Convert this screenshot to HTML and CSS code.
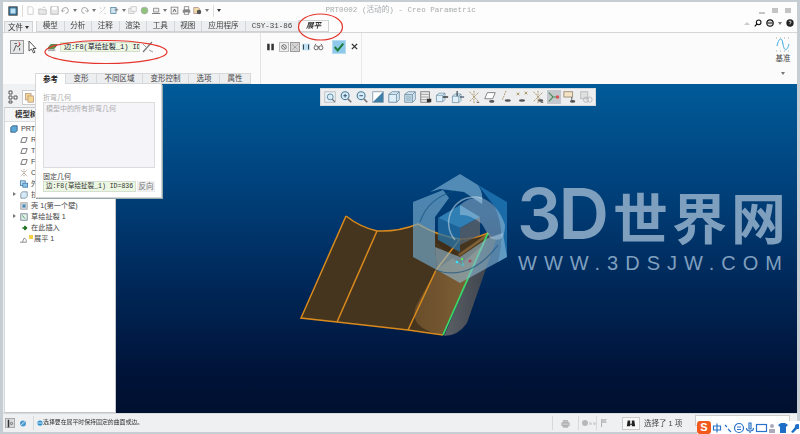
FILE: index.html
```html
<!DOCTYPE html>
<html lang="zh">
<head>
<meta charset="utf-8">
<title>PRT0002 (活动的) - Creo Parametric</title>
<link rel="stylesheet" href="styles.css">
</head>
<body>
<svg class="defs" width="0" height="0">
  <symbol id="cube" viewBox="0 0 16 16"><path d="M2 5l4-3h8v9l-3 3H2z" fill="#dff0fa" stroke="#6a8ca0"/><path d="M2 5h9v9M11 5l3-3" fill="none" stroke="#6a8ca0"/></symbol>
  <symbol id="zoom" viewBox="0 0 16 16"><circle cx="7" cy="6.500" r="4.500" fill="#d7ecf7" stroke="#4d7f9d" stroke-width="1.300"/><path d="M10 10l4 4" stroke="#777" stroke-width="2"/></symbol>
  <symbol id="datum" viewBox="0 0 16 16"><path d="M3 2l10 11M13 3L3 13M8 1v14" stroke="#a58a55" stroke-width="1" stroke-dasharray="2 1" fill="none"/><path d="M11 14h3" stroke="#333"/></symbol>
</svg>
<div class="app">
  <header class="titlebar">
    <div class="qat">
      <svg class="ico" viewBox="0 0 12 12"><rect x="1" y="1" width="10" height="10" fill="#3d7ea8" stroke="#333"/><rect x="3" y="3" width="6" height="6" fill="#bfe0f2"/></svg>
      <span class="qsep"></span>
      <svg class="ico dim" viewBox="0 0 12 12"><path d="M2.500 1h5l2 2v8h-7z" fill="#fff" stroke="#aaa"/></svg>
      <svg class="ico dim" viewBox="0 0 12 12"><path d="M1 4h4l1 1h5v6H1z" fill="#ddd" stroke="#999"/><path d="M6 3l2-2 2 2" fill="none" stroke="#999"/></svg>
      <svg class="ico dim" viewBox="0 0 12 12"><path d="M1 1h10v10H1z" fill="#ddd" stroke="#888"/><path d="M3 1h6v4H3z" fill="#fff"/></svg>
      <svg class="ico dim" viewBox="0 0 12 12"><path d="M2 7a4 4 0 1 1 4 3" fill="none" stroke="#777" stroke-width="1.200"/><path d="M0 5l2 3 3-2" fill="none" stroke="#777"/></svg>
      <span class="caret"></span>
      <svg class="ico dim" viewBox="0 0 12 12"><path d="M10 7a4 4 0 1 0-4 3" fill="none" stroke="#777" stroke-width="1.200"/><path d="M12 5l-2 3-3-2" fill="none" stroke="#777"/></svg>
      <span class="caret"></span>
      <svg class="ico dim" viewBox="0 0 12 12"><path d="M2 10l8-8M3 2l1 2M9 9l1 2M8 1l1 2" stroke="#999" fill="none" stroke-dasharray="2 1"/></svg>
      <svg class="ico" viewBox="0 0 12 12"><rect x="1" y="2" width="7" height="8" fill="#cfe5f1" stroke="#4d7f9d"/><path d="M6 5h5M9 3v4" stroke="#777"/></svg>
      <span class="caret"></span>
      <svg class="ico dim" viewBox="0 0 12 12"><rect x="1" y="3" width="7" height="7" fill="#e8e8e8" stroke="#aaa"/><rect x="4" y="1" width="7" height="6" fill="#f2f2f2" stroke="#aaa"/></svg>
      <svg class="ico" viewBox="0 0 12 12"><circle cx="6" cy="6" r="4.500" fill="#8fc27a" stroke="#aaa"/></svg>
      <svg class="ico" viewBox="0 0 12 12"><path d="M2 3h7v5H2z" fill="#eee" stroke="#777"/><path d="M0 10h11" stroke="#555"/></svg>
      <span class="caret"></span>
      <svg class="ico" viewBox="0 0 12 12"><rect x="1.500" y="1.500" width="9" height="9" fill="#f6f6f6" stroke="#777"/><path d="M4 8l2-4 2 4" fill="none" stroke="#333"/></svg>
      <svg class="ico" viewBox="0 0 12 12"><rect x="3" y="1" width="6" height="4" fill="#fff" stroke="#777"/><rect x="1" y="5" width="10" height="4" fill="#888"/><rect x="3" y="8" width="6" height="3" fill="#fff" stroke="#777"/></svg>
      <svg class="ico" viewBox="0 0 12 12"><path d="M1 2h6l2 2v6H1z" fill="#f2dca8" stroke="#a88"/><circle cx="8" cy="8" r="3" fill="#555"/></svg>
      <span class="caret"></span>
      <span class="qsep"></span>
      <span class="caret strong"></span>
    </div>
    <h1 class="apptitle">PRT0002 (活动的) - Creo Parametric</h1>
    <div class="winbtns"><span class="wb-min"></span><span class="wb-max"></span><span class="wb-close"></span></div>
  </header>

  <nav class="tabrow">
    <button class="filetab">文件 <i class="caret dark"></i></button>
    <div class="tabs">
      <span class="tab">模型</span><span class="tab">分析</span><span class="tab">注释</span><span class="tab">渲染</span><span class="tab">工具</span><span class="tab">视图</span><span class="tab app4">应用程序</span><span class="tab mono">CSY-31-86</span><span class="tab active">展平</span>
    </div>
    <div class="helpgroup">
      <span class="up"></span>
      <svg class="hi" viewBox="0 0 12 12"><circle cx="7" cy="5" r="3.500" fill="none" stroke="#111" stroke-width="1.600"/><path d="M4.500 7.500L1 11" stroke="#111" stroke-width="1.800"/></svg>
      <svg class="hi" viewBox="0 0 12 12"><circle cx="6" cy="6" r="4.800" fill="none" stroke="#111" stroke-width="1.800"/><path d="M2 5h8M2 7h8" stroke="#111"/></svg>
      <span class="caret"></span>
      <svg class="hi" viewBox="0 0 12 12"><circle cx="6" cy="6" r="5.500" fill="#222"/><path d="M4.500 4.500a1.600 1.600 0 1 1 2 1.700L6 7v1" fill="none" stroke="#fff" stroke-width="1.200"/></svg>
    </div>
  </nav>

  <section class="ribbon">
    <div class="rgroup first">
      <button class="tool pressed"><svg viewBox="0 0 14 14"><path d="M3 12l3-7 2 2 3-3M4 3h3M10 8v3" fill="none" stroke="#444"/><path d="M9 1l1.500 2.500L9 5" stroke="#c33" fill="none"/></svg></button>
      <svg class="arrow" viewBox="0 0 10 14"><path d="M2 1v10l2.500-2 2 4 1.500-.8-2-3.700H9z" fill="#fff" stroke="#555"/></svg>
      <svg class="leaf" viewBox="0 0 12 12"><path d="M1 8l3-4h7L8 8z" fill="#62a84c" stroke="#3d6b30"/><path d="M1 9h8v2H1z" fill="#aaa"/></svg>
      <div class="collector">边:F8(草绘扯裂_1) ID=836</div>
      <svg class="swap" viewBox="0 0 12 12"><path d="M1 11L10 1" stroke="#777" stroke-width="1.200"/><path d="M1 3l3 3M7 9l4 2" stroke="#999"/></svg>
    </div>
    <div class="rgroup second">
      <svg class="s13 pause" viewBox="0 0 10 12"><path d="M1 2h3v8H1zM6 2h3v8H6z" fill="#333"/></svg>
      <svg class="s13 framed" viewBox="0 0 12 12"><circle cx="6" cy="6" r="3.500" fill="none" stroke="#444"/><path d="M3.500 3.500l5 5" stroke="#444"/></svg>
      <svg class="s13 framed on" viewBox="0 0 12 12"><path d="M2 2l8 8M10 2l-8 8" stroke="#777" stroke-dasharray="2 1"/></svg>
      <svg class="s13" viewBox="0 0 12 12"><rect x="1" y="2" width="10" height="8" fill="#bfe0f2"/><path d="M3 3v6M9 3v6" stroke="#222"/></svg>
      <svg class="s13 glasses" viewBox="0 0 14 12"><circle cx="4" cy="7" r="2.600" fill="none" stroke="#444"/><circle cx="10" cy="7" r="2.600" fill="none" stroke="#444"/><path d="M6 6h2M2 4l2-2M12 4l-2-2" stroke="#444"/></svg>
      <button class="ok"><svg viewBox="0 0 14 14"><path d="M2 7l3.500 4L12 3" fill="none" stroke="#1c7d3c" stroke-width="2.400"/></svg></button>
      <svg class="cancel" viewBox="0 0 8 8"><path d="M1 1l6 6M7 1L1 7" stroke="#333" stroke-width="1.600"/></svg>
    </div>
    <div class="rgroup filler"></div>
    <div class="rgroup datum">
      <svg class="sine" viewBox="0 0 14 15"><path d="M1 9C3 0 6 0 7 7s4 8 6 0" fill="none" stroke="#38a8dc" stroke-width="1"/><path d="M0 1h14M0 14h14" stroke="#aaa" stroke-dasharray="1 3"/></svg>
      <span>基准</span>
      <span class="caret"></span>
    </div>
  </section>

  <main class="main">
    <aside class="leftpanel">
      <div class="navtabs">
        <svg class="nav" viewBox="0 0 12 14"><path d="M2 1h3v3H2zM2 6h3v3H2zM2 11h3v2H2zM7 6h3v3H7z" fill="#fff" stroke="#555"/></svg>
        <svg class="nav act" viewBox="0 0 12 14"><rect x="1" y="2" width="7" height="8" fill="#f3d68f" stroke="#b98"/><rect x="4" y="5" width="7" height="8" fill="#f3d68f" stroke="#b98"/></svg>
      </div>
      <div class="treebox">
        <div class="treehead">模型树</div>
        <ul class="tree">
          <li class="lvl0"><svg viewBox="0 0 10 10"><path d="M1 3l2-2h6v6L7 9H1z" fill="#59a8d8" stroke="#357"/></svg>PRT0002.PRT</li>
          <li><svg viewBox="0 0 10 10"><path d="M3 2h6L7 8H1z" fill="#fff" stroke="#555"/></svg>RIGHT</li>
          <li><svg viewBox="0 0 10 10"><path d="M3 2h6L7 8H1z" fill="#fff" stroke="#555"/></svg>TOP</li>
          <li><svg viewBox="0 0 10 10"><path d="M3 2h6L7 8H1z" fill="#fff" stroke="#555"/></svg>FRONT</li>
          <li><svg viewBox="0 0 10 10"><path d="M1 1l8 8M9 1L1 9M5 0v10" stroke="#987" stroke-dasharray="1.500 1" fill="none"/></svg>CSYS</li>
          <li><svg viewBox="0 0 10 10"><rect x="0.500" y="1" width="6" height="6" fill="#bfe0f2" stroke="#47a"/><rect x="3.500" y="4" width="6" height="5" fill="#8cc6e8" stroke="#47a"/></svg>外部复制</li>
          <li class="exp"><svg viewBox="0 0 10 10"><path d="M1 3l2-2h6v6L7 9H1z" fill="#d5eaf6" stroke="#789"/></svg>拉伸 1</li>
          <li><svg viewBox="0 0 10 10"><rect x="1" y="1" width="8" height="8" fill="#d8dde2" stroke="#999"/><rect x="3" y="3" width="4" height="4" fill="#4d8ab5"/></svg>壳 1(第一个壁)</li>
          <li class="exp"><svg viewBox="0 0 10 10"><rect x="1" y="1" width="8" height="8" fill="#e4f0e8" stroke="#678"/><path d="M3 3l3 4" stroke="#285"/></svg>草绘扯裂 1</li>
          <li><svg viewBox="0 0 10 10"><path d="M3 5h5M5.500 2.500L8 5 5.500 7.500" stroke="#166e1a" stroke-width="2" fill="none"/></svg>在此插入</li>
          <li class="flat"><svg viewBox="0 0 10 10"><path d="M0 9h8c0-3-1-5-3-5L3 9" fill="#fff" stroke="#777"/></svg><b></b>展平 1</li>
        </ul>
      </div>
    </aside>

    <div class="canvas">
      <svg class="scene" viewBox="116 84 681 329" preserveAspectRatio="none">
        <defs>
          <linearGradient id="bend" x1="0" y1="0" x2="1" y2="0"><stop offset="0" stop-color="#694d2a"/><stop offset="1" stop-color="#85663a"/></linearGradient>
          <linearGradient id="cyl" x1="0" y1="0" x2="1" y2="0"><stop offset="0" stop-color="#5b5f66"/><stop offset="1" stop-color="#3a4048"/></linearGradient>
        </defs>
        <path d="M488 233L496 240L467 323Q458 336 444 336Z" fill="url(#cyl)"/>
        <path d="M346 216Q360 227 377 231Q398 232 418 224Q438 236 460 239Q475 239 488 233L443 335L408 330L337 322L301 318Z" fill="#46351e"/>
        <path d="M436 270L488 233L443 335Q425 332 418 324Q412 316 416 306Z" fill="url(#bend)"/>
        <path d="M433 233L460 256L488 236L484 244L460 265L437 243Z" fill="#3d2c16" opacity=".7"/>
        <g fill="none" stroke="#d98a1c" stroke-width="1.500">
          <path d="M346 216L301 318L337 322L408 330L443 335"/>
          <path d="M346 216Q360 227 377 231Q398 232 418 224Q438 236 460 239Q475 239 488 233"/>
          <path d="M377 231L337 322M436 270L408 330M460 239L436 270"/>
        </g>
        <path d="M488 233L443 335" stroke="#3bd868" stroke-width="1.800"/>
        <!-- logo mark of the watermark -->
        <g>
          <path d="M478 185L507 202V257L498 262Q506 232 495 207Z" fill="#1f74b2" opacity=".85"/>
          <path d="M460 174L478 185Q484 194 482 204L464 192L440 189L430 192Z" fill="#72a8cc" opacity=".72"/>
          <path d="M413 202L443 190L449 198L435 217V247L437 270L413 257Z" fill="#72a8cc" opacity=".68"/>
          <path d="M438 218L460 205L480 217L460 228Z" fill="#2f7eb4"/>
          <path d="M438 218L460 228V252L438 240Z" fill="#2673a8" opacity=".75"/>
          <path d="M480 217L460 228V245L480 235Z" fill="#555f6a" opacity=".85"/>
          <path d="M435 247L460 257L488 238L503 233L507 257L460 283L437 270Z" fill="#8fbbd6" opacity=".6"/>
          <path d="M460 205Q470 196 482 198Q498 204 505 225Q505 245 490 238L482 224Q470 214 460 215Z" fill="#cfe2ee" opacity=".38"/>
          <path d="M455 240A26 26 0 0 1 482 198" fill="none" stroke="#dbe9f2" stroke-width="1.500" opacity=".5"/>
          <path d="M420 222Q428 198 455 191M435 270Q470 282 498 245" fill="none" stroke="#0f4c7c" stroke-width="1.200" opacity=".6"/>
        </g>
        <circle cx="457" cy="262" r="1.300" fill="#30e8ff"/><circle cx="462" cy="259" r="1" fill="#6f4"/><circle cx="470" cy="261" r="1.500" fill="#a54b60"/>
        <path d="M457 262L464 266L462 260" fill="none" stroke="#30d0e0" stroke-width=".6"/>
      </svg>

      <div class="viewbar">
        <svg viewBox="0 0 16 16"><rect x="2" y="2" width="12" height="12" fill="#e6f2f9" stroke="#bbb"/><use href="#zoom" width="12" height="12" x="3" y="3"/></svg>
        <svg viewBox="0 0 16 16"><use href="#zoom"/><path d="M5 6.500h4M7 4.500v4" stroke="#246" /></svg>
        <svg viewBox="0 0 16 16"><use href="#zoom"/><path d="M5 6.500h4" stroke="#246"/></svg>
        <svg viewBox="0 0 16 16"><rect x="2" y="2" width="12" height="12" fill="#fff" stroke="#89a"/><path d="M14 2L2 14h12z" fill="#3f7ea6"/></svg>
        <svg viewBox="0 0 16 16"><use href="#cube"/></svg>
        <svg viewBox="0 0 16 16"><use href="#cube"/><rect x="3" y="6" width="7" height="7" fill="#a9c5d4"/></svg>
        <svg viewBox="0 0 16 16"><rect x="2" y="2" width="10" height="12" fill="#eee" stroke="#777"/><path d="M2 5h10M2 8h10M2 11h10" stroke="#999"/><rect x="9" y="10" width="5" height="4" fill="#333"/></svg>
        <svg viewBox="0 0 16 16"><use href="#cube" width="13" height="13" y="2"/><path d="M9 8h6" stroke="#222" stroke-width="1.500"/></svg>
        <svg viewBox="0 0 16 16"><use href="#cube" width="13" height="13" y="3"/><path d="M7 1v6M10 8h5" stroke="#234" stroke-width="1.200"/></svg>
        <svg viewBox="0 0 16 16"><use href="#datum"/></svg>
        <svg viewBox="0 0 16 16"><path d="M5 3h9l-3 7H2z" fill="#fff" stroke="#777"/><ellipse cx="10" cy="13" rx="3" ry="1.500" fill="#555"/></svg>
        <svg viewBox="0 0 16 16"><path d="M8 1L4 11" stroke="#a58a55" stroke-dasharray="2 1"/><ellipse cx="10" cy="12" rx="3.500" ry="1.500" fill="#555"/></svg>
        <svg viewBox="0 0 16 16"><path d="M2 3l3 3M2 6l3-3M11 2l3 3M11 5l3-3" stroke="#a58a55"/><ellipse cx="8" cy="12" rx="3.500" ry="1.500" fill="#555"/></svg>
        <svg viewBox="0 0 16 16"><use href="#datum"/><ellipse cx="11" cy="12" rx="3" ry="1.500" fill="#555"/></svg>
        <svg class="sel" viewBox="0 0 16 16"><path d="M2 3l5 5-5 5M7 8h6" fill="none" stroke="#4a8b5a" stroke-width="1.300"/><circle cx="12" cy="8" r="2" fill="#d9534f"/></svg>
        <svg viewBox="0 0 16 16"><rect x="1" y="2" width="10" height="6" fill="#f4e4c3" stroke="#987"/><path d="M10 8v5" stroke="#555"/><ellipse cx="11" cy="13" rx="3" ry="1.500" fill="#555"/></svg>
        <svg class="off" viewBox="0 0 16 16"><rect x="2" y="2" width="8" height="8" fill="#ddd" stroke="#aaa"/><circle cx="8" cy="11" r="3" fill="none" stroke="#aaa"/><circle cx="12" cy="11" r="3" fill="none" stroke="#aaa"/></svg>
      </div>

      <div class="watermark">
        <div class="wm-big"><span class="wm-latin">3D</span><span class="wm-cjk">世界网</span></div>
        <div class="wm-url">WWW.3DSJW.COM</div>
      </div>
    </div>
  </main>

  <footer class="status">
    <div class="st-left">
      <button class="st-btn pressed"><svg viewBox="0 0 10 12"><path d="M2 1h2v10H2z" fill="#333"/><circle cx="7" cy="6" r="1.500" fill="none" stroke="#555"/></svg></button>
      <button class="st-btn"><svg viewBox="0 0 12 12"><circle cx="6" cy="6" r="4.500" fill="#4c9bd0"/><path d="M2 9l7-6" stroke="#fff"/></svg></button>
      <span class="st-sep"></span>
      <svg class="st-msg" viewBox="0 0 8 8"><circle cx="4" cy="4" r="3.500" fill="#2f92cf"/><path d="M1 4h6" stroke="#fff"/></svg>
      <span class="st-text">选择要在展平时保持固定的曲面或边。</span>
    </div>
    <div class="st-right">
      <span class="st-sep"></span>
      <svg class="st-ic" viewBox="0 0 12 12"><path d="M3 2h6v3H3zM1 5h10v4H1zM3 9h6v2H3z" fill="#c8c8c8" stroke="#aaa"/></svg>
      <span class="st-sep"></span>
      <span class="dots"><i class="d1"></i><i></i><i></i></span>
      <span class="st-sep"></span>
      <svg class="st-flag" viewBox="0 0 10 12"><path d="M2 1v10" stroke="#999"/><path d="M2 1h7L7 3.500 9 6H2z" fill="#c4c4c4"/></svg>
      <button class="find"><svg viewBox="0 0 12 12"><path d="M2 3h3v4h2V3h3l1 7H7V8H5v2H1z" fill="#222"/></svg></button>
      <span class="selcount">选择了 1 项</span>
      <span class="filter"></span>
    </div>
  </footer>

  <div class="dash">
    <div class="dash-tabs">
      <span class="dtab active">参考</span><span class="dtab">变形</span><span class="dtab wide">不同区域</span><span class="dtab wide">变形控制</span><span class="dtab">选项</span><span class="dtab">属性</span>
    </div>
    <div class="dash-body">
      <label class="dlabel">折弯几何</label>
      <div class="dlist">模型中的所有折弯几何</div>
      <label class="dlabel fixed">固定几何</label>
      <div class="drow"><div class="dinput">边:F8(草绘扯裂_1) ID=836</div><button class="dbtn">反向</button></div>
    </div>
  </div>

  <div class="ime">
    <span class="ime-s">S</span>
    <svg class="ime-icons" viewBox="0 0 88 12">
      <g fill="none" stroke="#2a72c8" stroke-width="1.200">
        <path d="M2.500 4h7v4h-7zM6 1.500v9"/>
        <path d="M14 3l2 2M17 7l3 3"/>
        <circle cx="28" cy="6" r="4.500"/><path d="M26 5h4M26 7.500h4"/>
        <path d="M38 1h2v6h-2zM35.500 6c0 4 7 4 7 0M39 9v2"/>
        <rect x="45.500" y="2.500" width="10" height="7"/>
      </g>
      <circle cx="61" cy="4" r="2" fill="#aab"/><path d="M58 11V7h6v4z" fill="#aab"/>
      <path d="M67 3l3-2h4l3 2-2 2v6h-6V5z" fill="#1e6ec8"/>
      <path d="M80 10l4-5a2.500 2.500 0 1 1 2 2l-4 4z" fill="#1e6ec8"/>
    </svg>
  </div>

  <svg class="marks" viewBox="0 0 800 434">
    <ellipse cx="106" cy="52" rx="61" ry="11.500"/>
    <ellipse cx="320.500" cy="27" rx="22" ry="13"/>
  </svg>
</div>
</body>
</html>
```
FILE: styles.css
```css
* { box-sizing: border-box; }
html, body { margin: 0; padding: 0; width: 800px; height: 434px; overflow: hidden; }
body { background: #c6ced3; font: 8px/1.2 "Liberation Sans", "Noto Sans CJK SC", sans-serif; color: #333; }
button { font: inherit; color: inherit; padding: 0; margin: 0; background: none; border: 0; }
svg { display: block; flex: none; }
.defs { position: absolute; }

.app { position: relative; width: 800px; height: 434px; padding: 2px 3px 2px 3px; display: flex; flex-direction: column; filter: blur(.3px); }

.titlebar { height: 19px; flex: none; background: #fdfdfd; display: flex; align-items: center; padding: 0 6px 2px 5px; position: relative; }
.qat { display: flex; align-items: center; gap: 2.700px; }
.ico { width: 9px; height: 9px; }
.ico:first-child { width: 10px; height: 10px; }
.dim { opacity: .7; }
.qsep { width: 1px; height: 12px; background: #ddd; margin: 0 1px; }
.caret { display: inline-block; width: 0; height: 0; border: 2px solid transparent; border-top: 3px solid #777; border-bottom: 0; flex: none; }
.caret.strong { border-top-color: #333; border-width: 3px 2px 0; }
.caret.dark { border-top-color: #333; vertical-align: middle; }
.apptitle { margin: 0 0 0 104px; font: 400 7.600px/1 "Liberation Mono", "Noto Sans CJK SC", monospace; color: #a8abae; white-space: nowrap; }
.winbtns { margin-left: auto; display: flex; gap: 7px; align-items: center; padding-right: 0; }
.winbtns span { width: 6px; height: 5px; background: #c4c4c4; }
.winbtns .wb-min { height: 2px; margin-top: 4px; }

.tabrow { height: 11px; flex: none; background: #fdfdfd; display: flex; align-items: stretch; padding-left: 1px; position: relative; }
.filetab { width: 29px; background: #eceef0; border: 1px solid #d0d3d6; border-bottom: 0; font-size: 7.500px; line-height: 9px; }
.tabs { display: flex; margin-left: 3px; background: #eceef0; border-bottom: 1px solid #cfd3d6; }
.tab { display: flex; align-items: center; justify-content: center; width: 27.500px; border-left: 1px solid #d3d6d9; font-size: 7.600px; color: #444; }
.tab.app4 { width: 44px; }
.tab.mono { width: 53px; font: 7.500px "Liberation Mono", monospace; }
.tab.active { width: 31px; font-style: italic; font-weight: 700; background: #fbfbfb; border: 1px solid #cfd3d6; border-bottom: 0; margin-top: -1px; color: #333; }
.helpgroup { position: absolute; right: 3px; top: -2px; display: flex; gap: 4px; align-items: center; }
.helpgroup .up { width: 0; height: 0; border: 3px solid transparent; border-bottom: 3px solid #ccc; border-top: 0; }
.hi { width: 8px; height: 8px; }

.ribbon { height: 52px; flex: none; background: #fbfbfb; border-top: 1px solid #d4d7d9; display: flex; }
.rgroup { display: flex; align-items: center; }
.first { width: 258px; border-right: 1px solid #e3e4e5; padding: 0 0 24px 7px; height: 51px; }
.tool { width: 14px; height: 14px; border: 1px solid #999; background: #e4e6e8; display: flex; align-items: center; justify-content: center; flex: none; }
.tool svg { width: 12px; height: 12px; }
.arrow { width: 10px; height: 14px; margin-left: 3px; }
.leaf { width: 11px; height: 11px; margin-left: 10px; }
.collector { width: 80px; height: 10px; margin-left: 2px; background: #eef7e4; border: 1px solid #d2e0ca; font: 7px/8px "Liberation Mono", "Noto Sans CJK SC", monospace; color: #223; overflow: hidden; white-space: nowrap; padding-left: 3px; }
.swap { width: 12px; height: 12px; margin-left: 2px; }
.second { padding: 0 0 24px 5px; gap: 1px; width: 101px; height: 51px; border-right: 1px solid #e9e9e9; }
.s13 { width: 10px; height: 10px; }
.pause { width: 9px; margin-right: 3px; }
.framed { border: 1px solid #bbb; background: #eee; }
.on { background: #d5d5d5; border-color: #999; }
.glasses { width: 11px; margin-left: 1px; }
.ok { width: 14px; height: 14px; background: #8fc9ea; border: 1px solid #b6dcf1; margin-left: 7px; display: flex; align-items: center; justify-content: center; }
.ok svg { width: 12px; height: 12px; }
.cancel { width: 7px; height: 7px; margin-left: 4px; }
.filler { flex: 1; }
.datum { width: 28px; flex-direction: column; gap: 2px; padding-top: 4px; justify-content: flex-start; font-size: 7.500px; color: #444; }
.sine { width: 14px; height: 15px; }
.datum .caret { margin-top: 7px; }

.main { flex: 1; min-height: 0; display: flex; background: #eff0f2; }
.leftpanel { width: 113px; flex: none; padding-left: 1px; display: flex; flex-direction: column; background: #f0f1f3; }
.navtabs { height: 23px; flex: none; padding: 6px 0 0 3px; display: flex; gap: 3px; }
.nav { width: 12px; height: 14px; }
.nav.act { width: 15px; height: 15px; background: #fff; border: 1px solid #ccc; padding: 1px; }
.treebox { flex: 1; background: #fff; border: 1px solid #c4c8cc; border-left-color: #d4d7da; }
.treehead { height: 14px; padding-left: 10px; font-weight: 700; line-height: 13px; font-size: 7.500px; background: #f5f6f7; border-bottom: 1px solid #ddd; }
.tree { list-style: none; margin: 0; padding: 1px 0 0; font-size: 7.200px; line-height: 11px; color: #444; }
.tree li { display: flex; height: 11px; align-items: center; padding-left: 15px; white-space: nowrap; gap: 3px; position: relative; }
.tree li svg { width: 8px; height: 8px; }
.tree li.lvl0 { padding-left: 5px; }
.tree li.exp::before { content: ""; position: absolute; left: 8px; top: 3px; border-left: 3px solid #777; border-top: 2.500px solid transparent; border-bottom: 2.500px solid transparent; }
.tree li.flat { gap: 0; }
.tree li.flat b { width: 4px; height: 4px; background: #f3cf4a; margin: 0 1px 3px 1px; }

.canvas { flex: 1; min-width: 0; position: relative; background: linear-gradient(#005b98 0%, #00447f 28%, #002a5c 58%, #001338 88%, #00102f 100%); overflow: hidden; }
.scene { position: absolute; inset: 0; width: 100%; height: 100%; }

.viewbar { position: absolute; left: 204px; top: 4px; display: flex; background: #eceef0; padding: 1px; border: 1px solid #d5d8da; height: 18px; }
.viewbar svg { width: 14px; height: 14px; margin: 0 1px; }
.viewbar .sel { background: #c4c8cc; }
.viewbar .off { opacity: .8; }

.watermark { position: absolute; left: 401px; top: 98px; color: #7f9fbe; }
.wm-big { display: flex; align-items: baseline; height: 64px; line-height: 64px; white-space: nowrap; }
.wm-latin { font: 600 70px/64px "Inter", "Liberation Sans", sans-serif; letter-spacing: -3px; }
.wm-cjk { font: 700 55px/64px "Noto Sans CJK SC", sans-serif; margin-left: 7px; letter-spacing: 4px; }
.wm-url { font: 400 20px/20px "Liberation Sans", sans-serif; letter-spacing: 7px; margin-top: 7px; margin-left: 1px; white-space: nowrap; }

.status { height: 19px; flex: none; background: #eff0f2; border-top: 1px solid #d7d9db; display: flex; align-items: center; justify-content: space-between; padding-left: 2px; }
.st-left, .st-right { display: flex; align-items: center; }
.st-btn { width: 10px; height: 10px; display: flex; align-items: center; justify-content: center; margin-right: 3px; }
.st-btn.pressed { background: #d8dadc; border: 1px solid #aaa; }
.st-btn svg { width: 8px; height: 9px; }
.st-sep { width: 1px; height: 14px; background: #d6d8da; }
.st-left .st-sep { margin: 0 3px 0 2px; }
.st-msg { width: 6px; height: 6px; margin-right: 0; }
.st-text { font-size: 5.900px; color: #333; white-space: nowrap; }
.st-right { padding-right: 7px; }
.st-ic { width: 9px; height: 9px; margin: 0 8px 0 8px; }
.dots { display: flex; align-items: center; gap: 1px; width: 17px; padding-left: 3px; }
.dots i { width: 3px; height: 3px; border-radius: 50%; background: #d0d0d0; }
.dots .d1 { width: 6px; height: 6px; background: #b8b8b8; }
.st-flag { width: 8px; height: 10px; margin: 0 14px 0 3px; }
.find { width: 18px; height: 13px; background: #f8f8f8; border: 1px solid #ccc; display: flex; align-items: center; justify-content: center; }
.find svg { width: 10px; height: 10px; }
.selcount { width: 51px; margin-left: 4px; font-size: 7.500px; color: #444; white-space: nowrap; flex: none; }
.filter { width: 95px; height: 11px; margin-bottom: 5px; background: #fff; border: 1px solid #ccc; }

.dash { position: absolute; left: 35px; top: 73px; width: 216px; }
.dash-tabs { height: 11px; display: flex; }
.dtab { width: 31px; display: flex; align-items: center; justify-content: center; background: #eceef0; border: 1px solid #d6d8da; border-left: 0; font-size: 7.500px; color: #444; }
.dtab.wide { width: 46px; }
.dtab.active { background: #fff; font-weight: 700; border-left: 1px solid #d6d8da; border-bottom: 0; color: #222; }
.dash-body { width: 127px; height: 114px; background: #fff; border: 1px solid #d4d6d8; border-top: 0; padding: 10px 6px 0 7px; display: flex; flex-direction: column; box-shadow: 1px 1px 0 #9aa; }
.dlabel { font-size: 7px; line-height: 8px; color: #aaa; height: 8px; flex: none; }
.dlabel.fixed { color: #444; margin-top: 4px; height: 9px; line-height: 9px; }
.dlist { height: 66px; flex: none; background: #f5f4f9; border: 1px solid #dcdcdc; font-size: 7px; line-height: 11px; padding-left: 2px; color: #aaa; }
.drow { display: flex; gap: 1px; }
.dinput { width: 94px; height: 11px; background: #ebf7e2; border: 1px solid #d4dfcf; font: 6.500px/9px "Liberation Mono", "Noto Sans CJK SC", monospace; padding-left: 2px; color: #333; white-space: nowrap; overflow: hidden; }
.dbtn { width: 18px; height: 11px; background: #eee; font-size: 7.500px; line-height: 10px; color: #777; }

.ime { position: absolute; left: 697px; top: 421px; width: 103px; height: 13px; background: #fff; display: flex; align-items: center; }
.ime-s { width: 14px; height: 13px; background: #f25a1d; color: #fff; font: 700 11px/13px "Liberation Sans", sans-serif; text-align: center; border-radius: 3px; flex: none; }
.ime-icons { width: 88px; height: 12px; }

.marks { position: absolute; inset: 0; width: 800px; height: 434px; pointer-events: none; fill: none; stroke: #e4352c; stroke-width: 1.200px; }
```
